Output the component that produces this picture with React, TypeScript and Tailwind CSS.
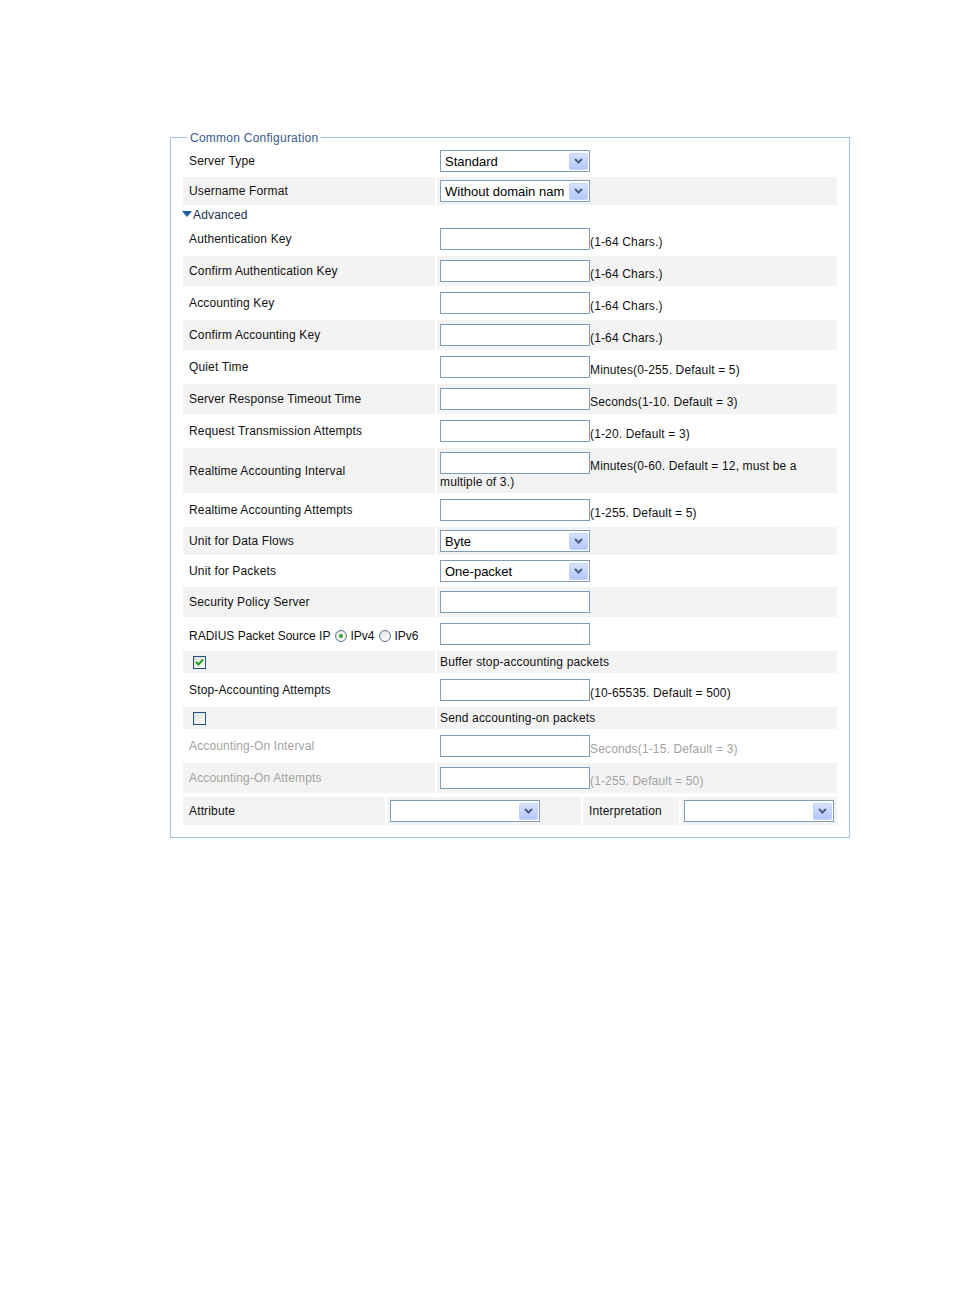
import React from "react";

const FONT = "font-['Liberation_Sans',Arial,sans-serif]";

function Chevron() {
  return (
    <svg width="9" height="6" viewBox="0 0 9 6">
      <polyline points="1,1 4.5,4.5 8,1" fill="none" stroke="#4a5d82" strokeWidth="2" />
    </svg>
  );
}

function Select({ value }: { value?: string }) {
  return (
    <div className="flex h-[22px] w-[150px] items-center border border-[#7f9db9] bg-white">
      <span className="flex-1 overflow-hidden whitespace-nowrap pl-[4px] text-[13px] leading-[15px] tracking-normal text-black">
        {value ?? ""}
      </span>
      <span className="mr-[1px] flex h-[17px] w-[19px] shrink-0 items-center justify-center rounded-[2px] border border-[#c3d2fb] bg-gradient-to-b from-[#d7e2fe] to-[#b3c7fb]">
        <Chevron />
      </span>
    </div>
  );
}

function TextInput() {
  return (
    <input
      type="text"
      readOnly
      className="inline-block h-[22px] w-[150px] border border-[#7f9db9] bg-white align-bottom outline-none"
    />
  );
}

function Checkbox({ checked }: { checked?: boolean }) {
  return (
    <span className="flex h-[13px] w-[13px] items-center justify-center border border-[#1c5180] bg-gradient-to-br from-[#dcdcd7] to-white">
      {checked && (
        <svg width="9" height="8" viewBox="0 0 9 8">
          <polyline points="1,4 3.5,6.5 8,1.5" fill="none" stroke="#21a121" strokeWidth="2" />
        </svg>
      )}
    </span>
  );
}

function Radio({ checked }: { checked?: boolean }) {
  return (
    <span className="flex h-[12px] w-[12px] items-center justify-center rounded-full border border-[#5a7190] bg-gradient-to-br from-[#e4e4e0] to-white">
      {checked && <span className="h-[4px] w-[4px] rounded-full bg-[#2ba12b]" />}
    </span>
  );
}

function SelRow({ label, value, gray }: { label: string; value: string; gray?: boolean }) {
  return (
    <div className="grid h-[28px] grid-cols-[252px_400px] gap-[2px]">
      <div className={`flex items-center pl-[6px] ${gray ? "bg-[#f3f3f3]" : ""}`}>{label}</div>
      <div className={`flex items-center pl-[3px] ${gray ? "bg-[#f3f3f3]" : ""}`}>
        <Select value={value} />
      </div>
    </div>
  );
}

function InRow({
  label,
  hint,
  gray,
  disabled,
}: {
  label: React.ReactNode;
  hint?: string;
  gray?: boolean;
  disabled?: boolean;
}) {
  const bg = gray ? "bg-[#f3f3f3]" : "";
  const tc = disabled ? "text-[#a3a3a3]" : "";
  return (
    <div className="grid h-[30px] grid-cols-[252px_400px] gap-[2px]">
      <div className={`flex items-center pl-[6px] ${bg} ${tc}`}>{label}</div>
      <div className={`pl-[3px] pt-[4px] leading-[16px] ${bg}`}>
        <TextInput />
        {hint && <span className={tc}>{hint}</span>}
      </div>
    </div>
  );
}

function CheckRow({ checked, text }: { checked?: boolean; text: string }) {
  return (
    <div className="grid h-[22px] grid-cols-[252px_400px] gap-[2px]">
      <div className="flex items-center bg-[#f3f3f3] pl-[10px]">
        <Checkbox checked={checked} />
      </div>
      <div className="flex items-center bg-[#f3f3f3] pl-[3px]">{text}</div>
    </div>
  );
}

export default function App() {
  return (
    <div className={`${FONT} min-h-[1296px] bg-white pl-[170px] pt-[137px] text-[12px] leading-[14px] tracking-[0.15px] text-[#111]`}>
      <div className="relative w-[680px] border border-[#a7bfe1] pb-[12px] pl-[12px] pr-[12px] pt-[9px]">
        <span className="absolute left-[16px] top-[-7px] bg-white px-[3px] text-[12px] leading-[14px] tracking-[0.25px] text-[#3a5a8a]">
          Common Configuration
        </span>
        <div className="flex flex-col gap-[2px]">
          <SelRow label="Server Type" value="Standard" />
          <SelRow label="Username Format" value="Without domain nam" gray />
          <div className="-ml-px flex h-[15px] items-center">
            <svg width="10" height="6" viewBox="0 0 10 6" className="mb-[1px]">
              <polygon points="0,0 10,0 5,6" fill="#1f5e9e" />
            </svg>
            <span className="ml-[1px] text-[#1e2d4c]">Advanced</span>
          </div>
          <InRow label="Authentication Key" hint="(1-64 Chars.)" />
          <InRow label="Confirm Authentication Key" hint="(1-64 Chars.)" gray />
          <InRow label="Accounting Key" hint="(1-64 Chars.)" />
          <InRow label="Confirm Accounting Key" hint="(1-64 Chars.)" gray />
          <InRow label="Quiet Time" hint="Minutes(0-255. Default = 5)" />
          <InRow label="Server Response Timeout Time" hint="Seconds(1-10. Default = 3)" gray />
          <InRow label="Request Transmission Attempts" hint="(1-20. Default = 3)" />
          <div className="grid h-[45px] grid-cols-[252px_400px] gap-[2px]">
            <div className="flex items-center bg-[#f3f3f3] pl-[6px]">Realtime Accounting Interval</div>
            <div className="bg-[#f3f3f3] pl-[3px] pr-[3px] pt-[4px] leading-[16px]">
              <TextInput />
              <span>Minutes(0-60. Default = 12, must be a</span>
              <br />
              <span>multiple of 3.)</span>
            </div>
          </div>
          <InRow label="Realtime Accounting Attempts" hint="(1-255. Default = 5)" />
          <SelRow label="Unit for Data Flows" value="Byte" gray />
          <SelRow label="Unit for Packets" value="One-packet" />
          <InRow label="Security Policy Server" gray />
          <InRow
            label={
              <span className="mt-[3px] flex items-center tracking-normal">
                <span>RADIUS Packet Source IP</span>
                <span className="ml-[5px]">
                  <Radio checked />
                </span>
                <span className="ml-[3px]">IPv4</span>
                <span className="ml-[5px]">
                  <Radio />
                </span>
                <span className="ml-[3px]">IPv6</span>
              </span>
            }
          />
          <CheckRow checked text="Buffer stop-accounting packets" />
          <InRow label="Stop-Accounting Attempts" hint="(10-65535. Default = 500)" />
          <CheckRow text="Send accounting-on packets" />
          <InRow label="Accounting-On Interval" hint="Seconds(1-15. Default = 3)" disabled />
          <InRow label="Accounting-On Attempts" hint="(1-255. Default = 50)" gray disabled />
          <div className="mt-[2px] grid h-[28px] grid-cols-[202px_194px_96px_156px] gap-[2px]">
            <div className="flex items-center bg-[#f3f3f3] pl-[6px]">Attribute</div>
            <div className="flex items-center bg-[#f3f3f3] pl-[3px]">
              <Select />
            </div>
            <div className="flex items-center bg-[#f3f3f3] pl-[6px]">Interpretation</div>
            <div className="flex items-center bg-[#f3f3f3] pl-[3px]">
              <Select />
            </div>
          </div>
        </div>
      </div>
    </div>
  );
}
